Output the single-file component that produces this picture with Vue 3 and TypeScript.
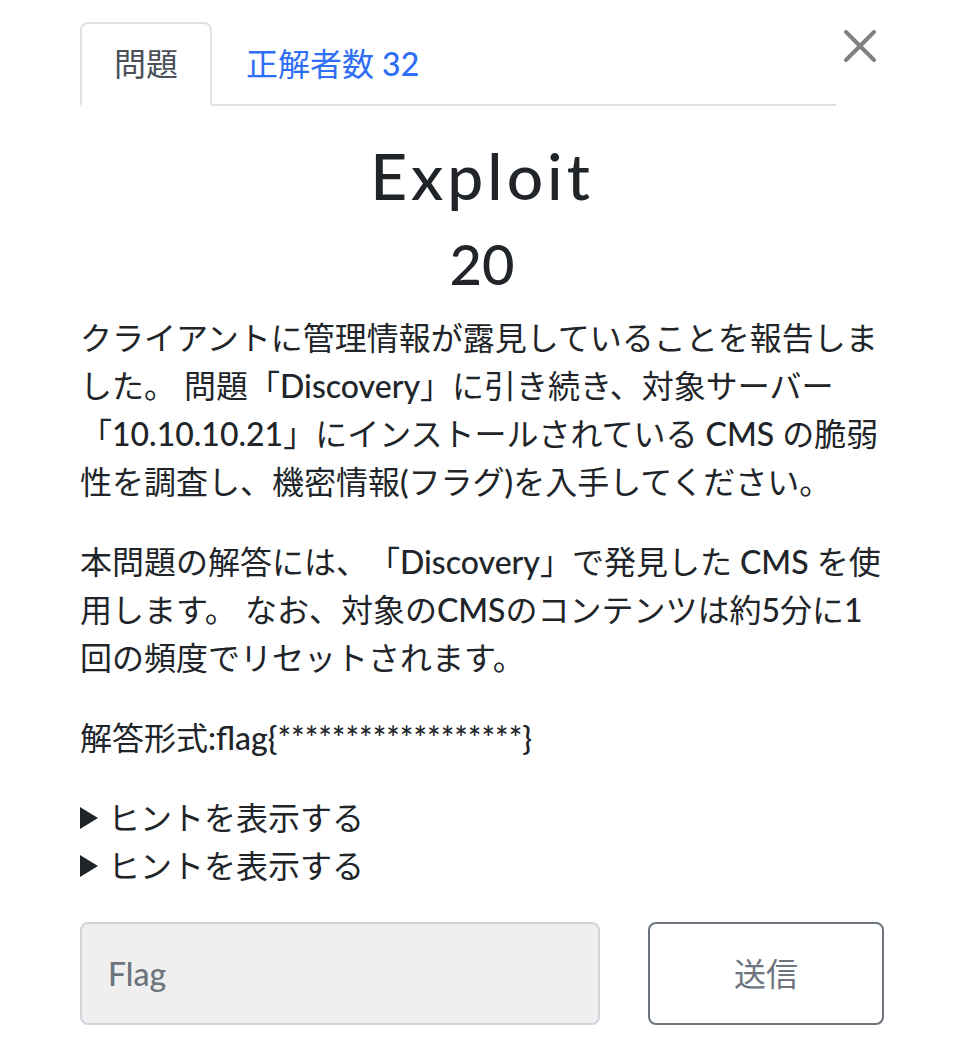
<script setup lang="ts">
import { ref } from 'vue'

const activeTab = ref('challenge')
const flag = ref('')
const hints = [
  { id: 1, label: 'ヒントを表示する' },
  { id: 2, label: 'ヒントを表示する' },
]
</script>

<template>
  <main class="modal">
    <header class="top">
      <nav class="tabs">
        <button type="button" class="tab" :class="{ active: activeTab === 'challenge' }" @click="activeTab = 'challenge'">問題</button>
        <button type="button" class="tab" :class="{ active: activeTab === 'solves' }" @click="activeTab = 'solves'">正解者数 32</button>
      </nav>
      <button type="button" class="close" aria-label="閉じる">
        <svg viewBox="0 0 32 32" width="32" height="32" aria-hidden="true">
          <path d="M2 2 30 30M30 2 2 30" fill="none" stroke="#808080" stroke-width="4" stroke-linecap="round" />
        </svg>
      </button>
    </header>

    <h1 class="title">Exploit</h1>
    <h2 class="points">20</h2>

    <section class="description">
      <p>クライアントに管理情報が露見していることを報告しました。 問題「Discovery」に引き続き、対象サーバー「10.10.10.21」にインストールされている CMS の脆弱性を調査し、機密情報(フラグ)を入手してください。</p>
      <p>本問題の解答には、「Discovery」で発見した CMS を使用します。 なお、対象のCMSのコンテンツは約5分に1回の頻度でリセットされます。</p>
      <p>解答形式:flag{******************}</p>
    </section>

    <section class="hints">
      <details v-for="hint in hints" :key="hint.id">
        <summary>{{ hint.label }}</summary>
      </details>
    </section>

    <form class="answer" @submit.prevent>
      <input v-model="flag" class="field" type="text" placeholder="Flag" aria-label="Flag" />
      <button type="submit" class="submit">送信</button>
    </form>
  </main>
</template>

<style>
body {
  margin: 0;
  background: #fff;
}
</style>

<style scoped>
.modal {
  box-sizing: border-box;
  padding: 22px 76px 24px 80px;
  color: #212529;
  font-family: "Lato Medium", Lato, "Noto Sans CJK JP", sans-serif;
  font-size: 32px;
  line-height: 48px;
  text-spacing-trim: space-all;
}

button,
input {
  box-sizing: border-box;
  margin: 0;
  font: inherit;
}

.top {
  display: flex;
  align-items: flex-start;
}

.tabs {
  display: flex;
  flex: 1;
  border-bottom: 2px solid #dee2e6;
}

.tab {
  margin-bottom: -2px;
  padding: 16px 32px;
  border: 2px solid transparent;
  border-radius: 8px 8px 0 0;
  background: transparent;
  color: #2f6ef6;
}

.tab.active {
  border-color: #dee2e6 #dee2e6 #fff;
  background: #fff;
  color: #495057;
}

.close {
  display: flex;
  margin-top: 8px;
  padding: 0 8px;
  border: 0;
  background: transparent;
}

.title {
  margin: 30px 0 0;
  font-size: 64px;
  font-weight: 500;
  line-height: 80px;
  letter-spacing: 4px;
  text-align: center;
}

.points {
  margin: 16px 0 18px;
  font-size: 56px;
  font-weight: 500;
  line-height: 64px;
  text-align: center;
}

.description p {
  margin: 0 0 32px;
}

.hints {
  margin-bottom: 32px;
}

.hints summary {
  display: flex;
  align-items: center;
  gap: 10px;
  list-style: none;
  cursor: pointer;
}

.hints summary::before {
  width: 18px;
  height: 22px;
  background: currentColor;
  clip-path: polygon(0 0, 100% 50%, 0 100%);
  content: "";
}

.hints details[open] summary::before {
  transform: rotate(90deg);
}

.answer {
  display: grid;
  grid-template-columns: 520fr 236fr;
  gap: 48px;
}

.field {
  width: 100%;
  min-width: 0;
  min-height: 103px;
  padding: 0 26px;
  border: 2px solid #ced4da;
  border-radius: 8px;
  background: #efefef;
  color: #212529;
}

.field::placeholder {
  color: #6c757d;
  opacity: 1;
}

.submit {
  border: 2px solid #6c757d;
  border-radius: 8px;
  background: #fff;
  color: #6c757d;
}
</style>
